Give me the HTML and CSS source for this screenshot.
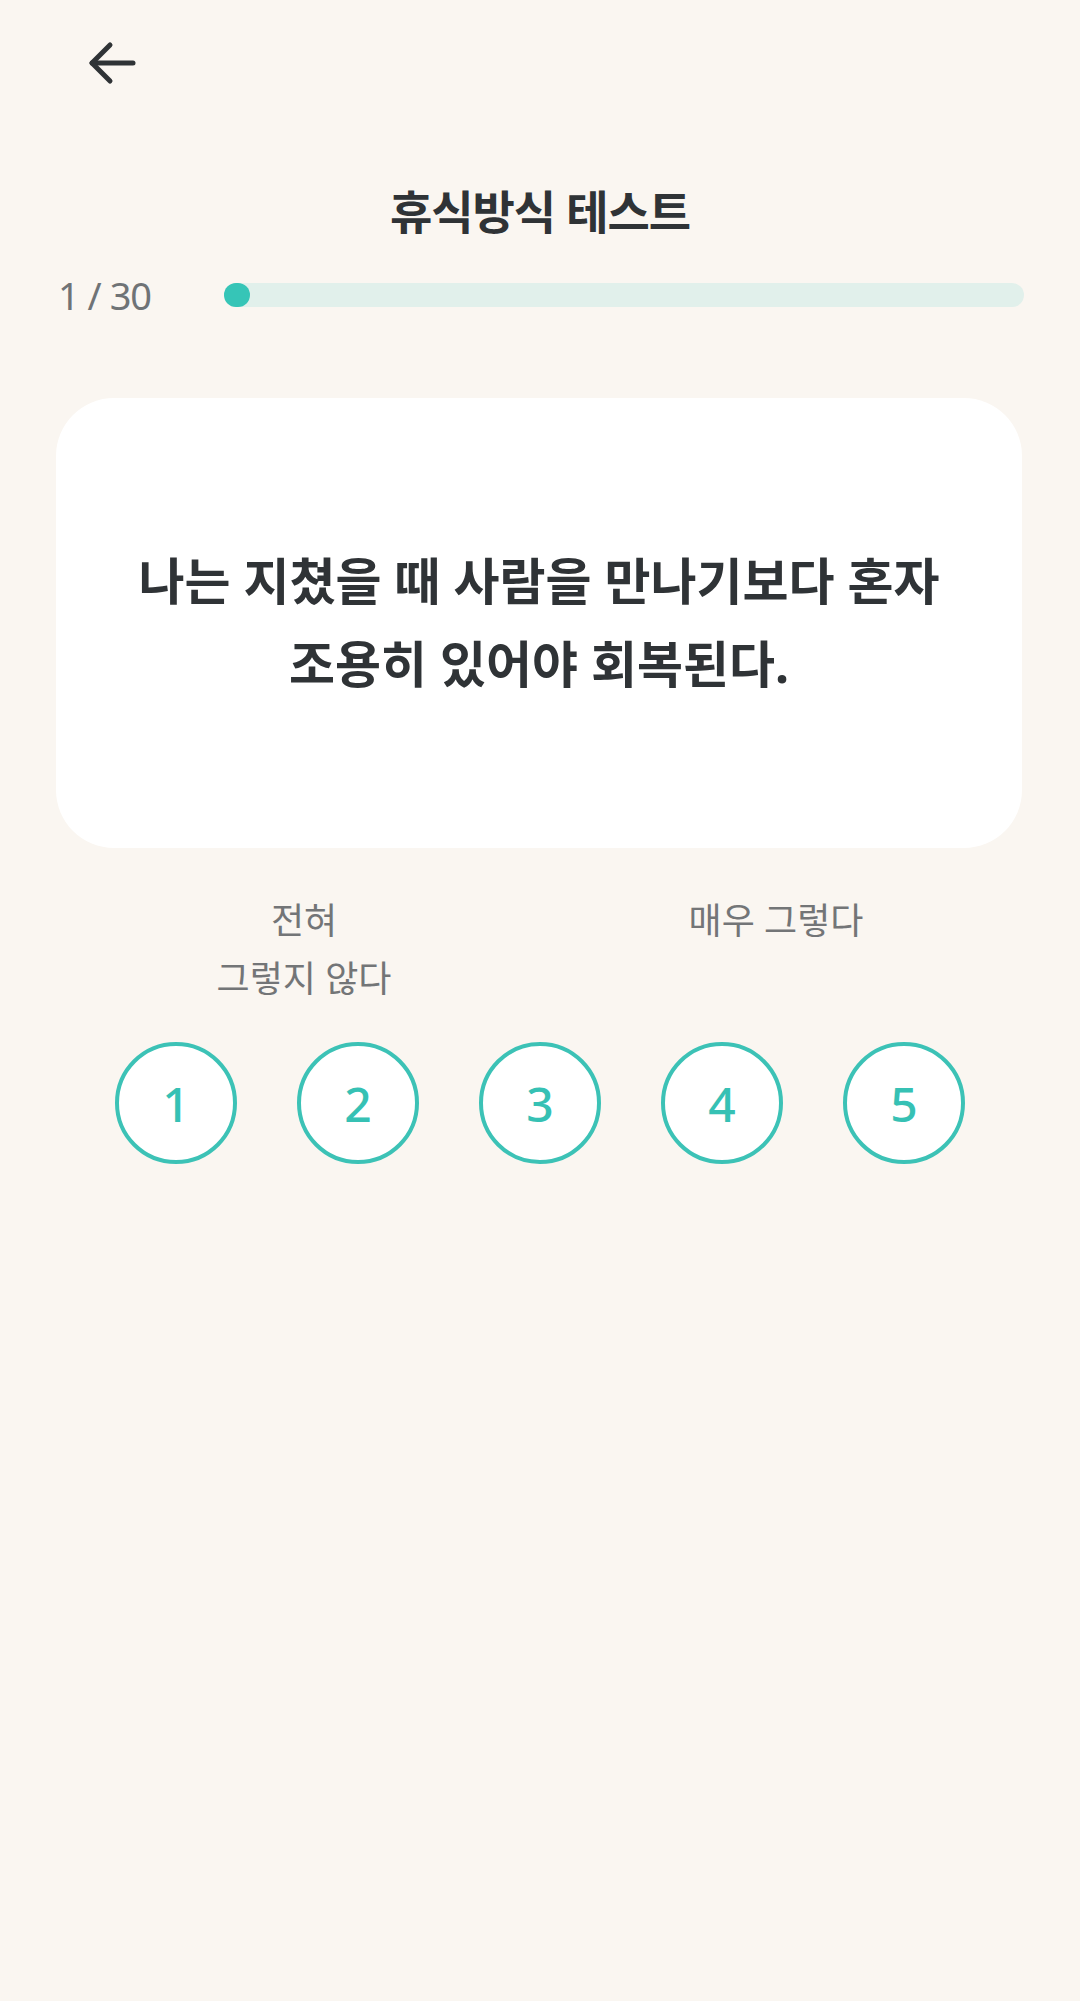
FILE: index.html
```html
<!DOCTYPE html>
<html lang="ko">

<head>
    <meta charset="UTF-8">
    <meta name="viewport" content="width=device-width, initial-scale=1.0">
    <title>휴식방식 테스트</title>
    <link rel="stylesheet" href="styles.css">
</head>

<body>

    <div class="topbar">
        <button class="back-btn" aria-label="뒤로">
            <svg width="48" height="48" viewBox="0 0 48 48" fill="none" stroke="#2f3336" stroke-width="5"
                stroke-linecap="round" stroke-linejoin="round">
                <path d="M45 23H4" />
                <path d="M22 5L4 23L22 41" />
            </svg>
        </button>
    </div>

    <h1 class="title">휴식방식 테스트</h1>

    <div class="progress-row">
        <div class="counter">1 / 30</div>
        <div class="bar">
            <div class="bar-fill"></div>
        </div>
    </div>

    <div class="question-card">
        <p class="question">나는 지쳤을 때 사람을 만나기보다 혼자<br>조용히 있어야 회복된다.</p>
    </div>

    <div class="scale-labels">
        <div class="scale-label">전혀<br>그렇지 않다</div>
        <div class="scale-label">매우 그렇다</div>
    </div>

    <div class="answers">
        <button class="answer">1</button>
        <button class="answer">2</button>
        <button class="answer">3</button>
        <button class="answer">4</button>
        <button class="answer">5</button>
    </div>

</body>

</html>
```

FILE: styles.css
```css
body {
    margin: 0;
    background-color: #faf6f1;
    font-family: "Noto Sans", "Noto Sans CJK KR", sans-serif;
    color: #2f3336;
    min-height: 2001px;
}

.topbar {
    height: 181px;
    box-sizing: border-box;
    padding: 40px 0 0 88px;
}

.back-btn {
    display: block;
    width: 48px;
    height: 48px;
    padding: 0;
    border: none;
    background: none;
    cursor: pointer;
}

.title {
    margin: 0;
    height: 60px;
    line-height: 60px;
    text-align: center;
    font-size: 46px;
    font-weight: 700;
    letter-spacing: -1px;
}

.progress-row {
    display: flex;
    align-items: center;
    height: 40px;
    margin-top: 34px;
    padding: 0 56px 0 58px;
}

.counter {
    width: 166px;
    font-size: 38px;
    color: #6f7376;
    letter-spacing: -1px;
}

.bar {
    flex: 1;
    height: 24px;
    border-radius: 12px;
    background-color: #e1f0eb;
}

.bar-fill {
    width: 26px;
    height: 24px;
    border-radius: 12px;
    background-color: #36c5b7;
}

.question-card {
    margin: 83px 58px 0 56px;
    height: 450px;
    border-radius: 58px;
    background-color: #fff;
    display: flex;
    align-items: center;
    justify-content: center;
}

.question {
    margin: 0;
    text-align: center;
    font-size: 50px;
    font-weight: 700;
    line-height: 83px;
    letter-spacing: 0;
}

.scale-labels {
    display: flex;
    justify-content: center;
    gap: 172px;
    margin-top: 44px;
}

.scale-label {
    width: 300px;
    text-align: center;
    font-size: 36px;
    line-height: 58px;
    color: #737577;
}

.answers {
    display: flex;
    justify-content: center;
    gap: 60px;
    margin-top: 34px;
}

.answer {
    width: 122px;
    height: 122px;
    box-sizing: border-box;
    border: 4px solid #3cc2b6;
    border-radius: 50%;
    background-color: #fff;
    color: #36c1b4;
    font-family: "Noto Sans", sans-serif;
    font-size: 48px;
    font-weight: 500;
    padding: 0;
    cursor: pointer;
}
```
